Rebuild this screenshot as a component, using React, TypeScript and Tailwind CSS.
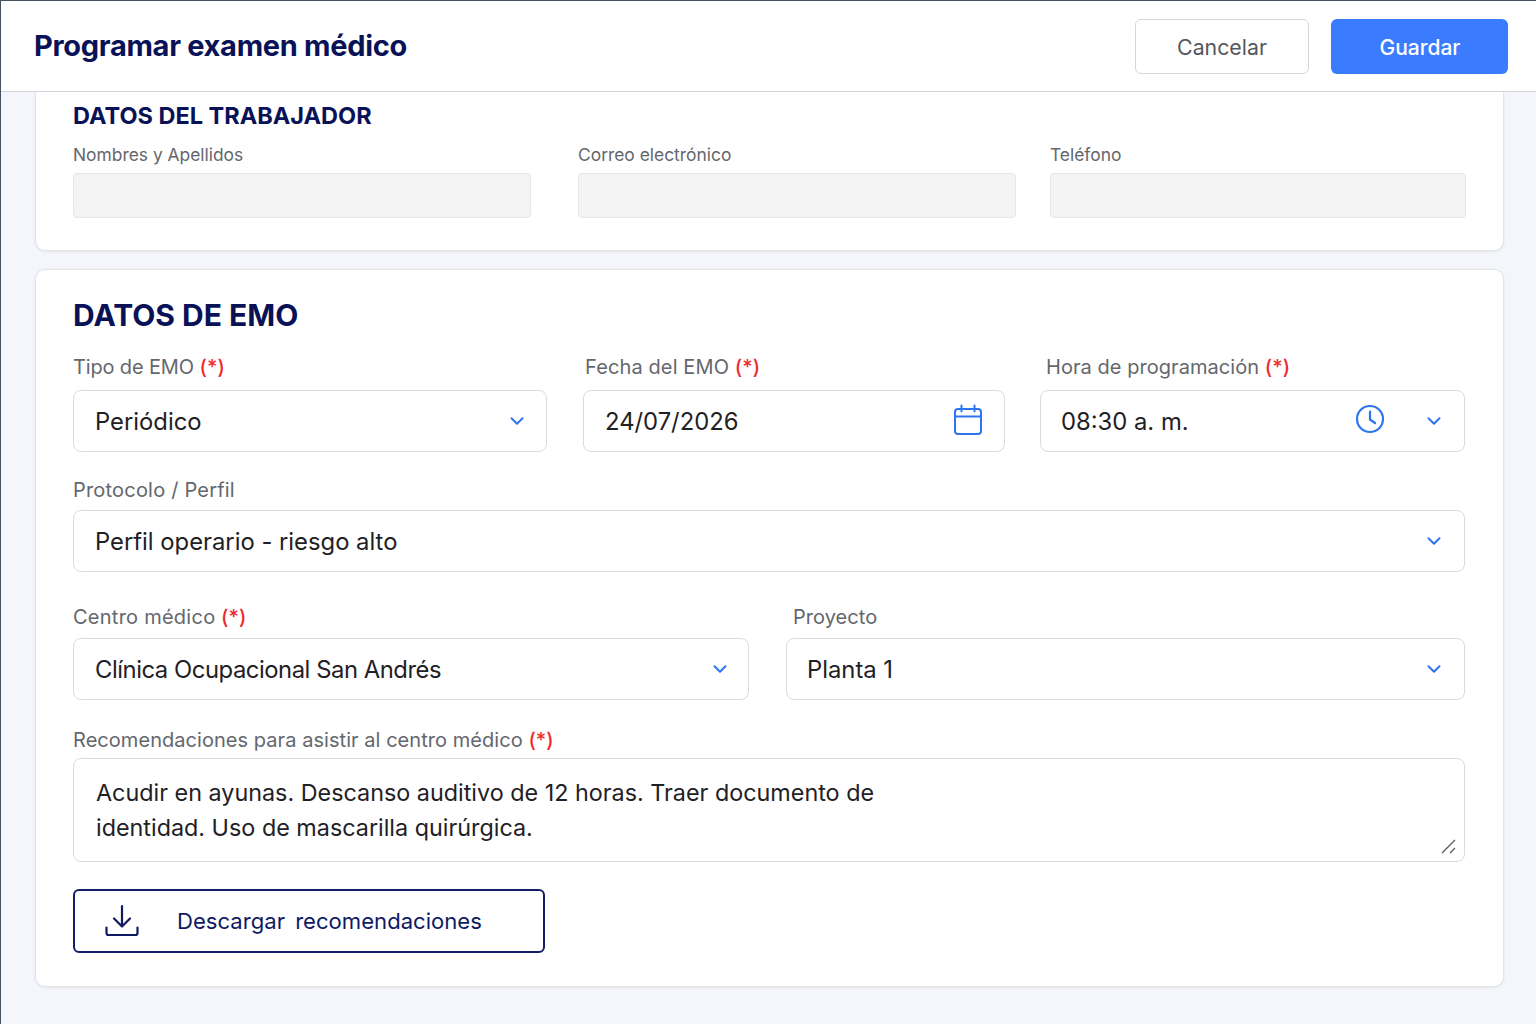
import React from 'react'
import { ChevronDown } from 'lucide-react'

function Label({ text, required, className }: { text: string; required?: boolean; className?: string }) {
  return (
    <div className="text-[20px] leading-[24px] tracking-[0.05px] text-[#64676d] whitespace-nowrap">
      <span className={className}>{text}</span> {required && <span className="text-[#ee2b2f] font-medium">(*)</span>}
    </div>
  )
}

function Chevron() {
  return <ChevronDown className="w-[22px] h-[22px] text-[#2f74f0] shrink-0" strokeWidth={2.2} />
}

function SelectBox({ value, className, children }: { value: string; className?: string; children?: React.ReactNode }) {
  return (
    <div className={"h-[62px] flex items-center justify-between rounded-[8px] border border-[#d9dbdf] bg-white text-[23.8px] text-[#1f2125] whitespace-nowrap " + (className ?? "pl-[21px] pr-[19px]")}>
      <span className="pt-[2px]">{value}</span>
      {children ?? <Chevron />}
    </div>
  )
}

function ReadOnly({ label, className }: { label: string; className: string }) {
  return (
    <div className={"shrink-0 " + className}>
      <div className="text-[17.4px] leading-[22px] text-[#64676d]">{label}</div>
      <div className="mt-[7px] h-[45px] rounded-[4px] border border-[#e5e6e8] bg-[#f3f3f3]" />
    </div>
  )
}

export default function App() {
  return (
    <div className="w-full h-[1024px] overflow-hidden bg-[#f5f6fb] border-l border-t border-[#46535f] font-['Inter',sans-serif]">
      <header className="h-[91px] flex items-center justify-between pl-[33px] pr-[28px] bg-white border-b border-[#d3d6dc]">
        <h1 className="text-[29px] font-bold text-[#0a1257] tracking-[-0.3px]">Programar examen médico</h1>
        <div className="flex gap-[22px] mt-[1px]">
          <button className="w-[174px] h-[55px] pt-[2px] rounded-[6px] border border-[#d5d7da] bg-white text-[21.3px] text-[#55585e]">Cancelar</button>
          <button className="w-[177px] h-[55px] pt-[2px] pl-[1px] rounded-[6px] bg-[#3b7cff] text-[21px] font-medium text-white">Guardar</button>
        </div>
      </header>

      <main className="pl-[34px] pr-[32px]">
        <section className="h-[159px] pl-[37px] pr-[37px] pt-[9px] bg-white rounded-b-[10px] border border-t-0 border-[#e3e4e8] shadow-[0_1px_3px_rgba(0,0,0,0.07)]">
          <h2 className="text-[23.5px] leading-[29px] font-bold text-[#0a1257]">DATOS DEL TRABAJADOR</h2>
          <div className="mt-[14px] flex">
            <ReadOnly label="Nombres y Apellidos" className="w-[458px] mr-[47px]" />
            <ReadOnly label="Correo electrónico" className="w-[438px] mr-[34px]" />
            <ReadOnly label="Teléfono" className="w-[416px]" />
          </div>
        </section>

        <section className="mt-[18px] h-[718px] pl-[37px] pr-[38px] pt-[27px] bg-white rounded-[10px] border border-[#e3e4e8] shadow-[0_1px_3px_rgba(0,0,0,0.07)]">
          <h2 className="text-[30px] leading-[36px] font-bold text-[#0a1257]">DATOS DE EMO</h2>

          <div className="mt-[22px] flex">
            <div className="w-[474px] mr-[36px] shrink-0">
              <Label text="Tipo de EMO" required className="tracking-[-0.15px]" />
              <div className="mt-[11px]"><SelectBox value="Periódico" className="pl-[21px] pr-[18px]" /></div>
            </div>
            <div className="w-[422px] mr-[35px] shrink-0">
              <div className="pl-[2px]"><Label text="Fecha del EMO" required className="tracking-[0.12px]" /></div>
              <div className="mt-[11px]">
                <SelectBox value="24/07/2026">
                  <svg width="30" height="32" viewBox="0 0 30 32" fill="none" stroke="#2f74f0" strokeWidth="2" className="mr-[2px] -mt-[2px]">
                    <rect x="2" y="5" width="26" height="25" rx="3" />
                    <path d="M2 12.500h26M8.500 1.500v6M21.500 1.500v6" strokeLinecap="round" />
                  </svg>
                </SelectBox>
              </div>
            </div>
            <div className="w-[425px] shrink-0">
              <div className="pl-[6px]"><Label text="Hora de programación" required /></div>
              <div className="mt-[11px]">
                <SelectBox value="08:30 a. m." className="pl-[20px] pr-[19px]">
                  <div className="flex items-center gap-[38px]">
                    <svg width="30" height="30" viewBox="0 0 30 30" fill="none" stroke="#2f74f0" strokeWidth="2.2" className="-mt-[4px]">
                      <circle cx="15" cy="15" r="13" />
                      <path d="M15 7.500v8l5 3.500" strokeLinecap="round" strokeLinejoin="round" />
                    </svg>
                    <Chevron />
                  </div>
                </SelectBox>
              </div>
            </div>
          </div>

          <div className="mt-[26px]">
            <Label text="Protocolo / Perfil" className="tracking-[0.2px]" />
            <div className="mt-[8px]"><SelectBox value="Perfil operario - riesgo alto" /></div>
          </div>

          <div className="mt-[33px] flex">
            <div className="w-[676px] mr-[37px] shrink-0">
              <Label text="Centro médico" required className="tracking-[0.25px]" />
              <div className="mt-[9px]"><SelectBox value="Clínica Ocupacional San Andrés" className="pl-[21px] pr-[17px] tracking-[-0.45px]" /></div>
            </div>
            <div className="w-[679px] shrink-0">
              <div className="pl-[7px]"><Label text="Proyecto" /></div>
              <div className="mt-[9px]"><SelectBox value="Planta 1" className="pl-[20px] pr-[19px]" /></div>
            </div>
          </div>

          <div className="mt-[28px]">
            <Label text="Recomendaciones para asistir al centro médico" required />
            <div className="relative mt-[6px] h-[104px] pl-[22px] pt-[16px] rounded-[8px] border border-[#d9dbdf] bg-white text-[23.35px] leading-[35px] text-[#1f2125]">
              Acudir en ayunas. Descanso auditivo de 12 horas. Traer documento de<br />
              identidad. Uso de mascarilla quirúrgica.
              <svg width="16" height="16" viewBox="0 0 16 16" className="absolute right-[7px] bottom-[6px]" stroke="#55585e" strokeWidth="1.3" fill="none">
                <path d="M1 14L14 1M9 14l5-5" />
              </svg>
            </div>
          </div>

          <button className="mt-[27px] w-[472px] h-[64px] flex items-center pl-[30px] rounded-[6px] border-2 border-[#141e68] bg-white text-[22.1px] [word-spacing:4px] text-[#0f1a63]">
            <svg width="34" height="34" viewBox="0 0 34 34" fill="none" stroke="#0f1a63" strokeWidth="2.2" strokeLinecap="round" strokeLinejoin="round">
              <path d="M17 2v20M9 14.500l8 8 8-8M1.500 23.500v5.500a2 2 0 0 0 2 2h27a2 2 0 0 0 2-2v-5.500" />
            </svg>
            <span className="ml-[38px] pt-[1px]">Descargar recomendaciones</span>
          </button>
        </section>
      </main>
    </div>
  )
}
